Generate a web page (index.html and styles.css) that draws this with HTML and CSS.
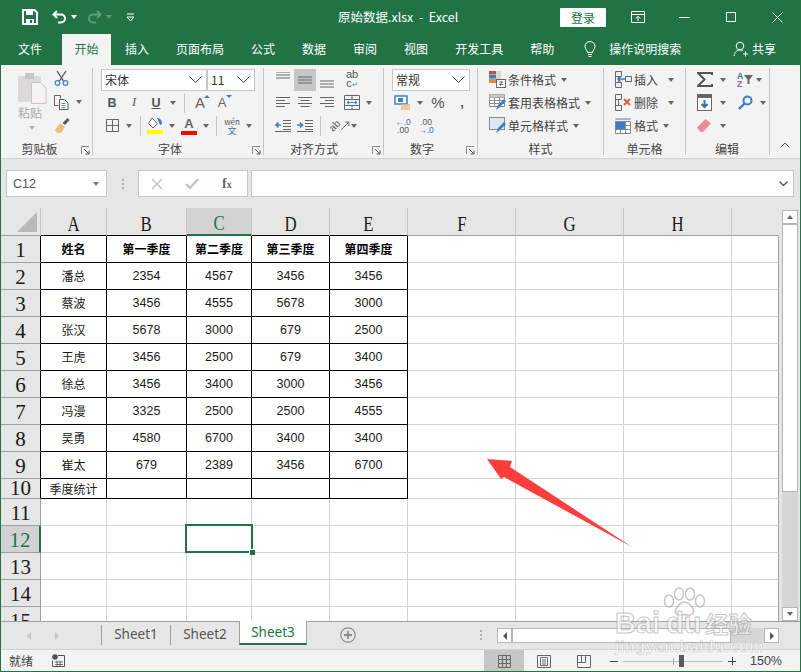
FILE: index.html
```html
<!DOCTYPE html>
<html lang="zh">
<head>
<meta charset="utf-8">
<title>原始数据.xlsx - Excel</title>
<link rel="stylesheet" href="styles.css">
</head>
<body>
<div class="app">
  <header class="titlebar">
    <div class="qat">
      <svg class="q-save" width="16" height="16" viewBox="0 0 16 16"><path d="M1 1h11.500L15 3.500V15H1z" fill="none" stroke="#fff" stroke-width="2"/><rect x="4" y="1" width="7" height="5" fill="#fff"/><rect x="4" y="10" width="8" height="5" fill="#fff"/><rect x="8" y="11" width="2" height="3" fill="#217346"/></svg>
      <svg class="q-undo" width="15" height="14" viewBox="0 0 15 14"><path d="M5 1L1.500 4.500 5 8M2 4.500h7a4 4 0 0 1 0 8H6" fill="none" stroke="#fff" stroke-width="2"/></svg>
      <span class="tri white"></span>
      <svg class="q-redo" width="15" height="14" viewBox="0 0 15 14"><path d="M10 1l3.500 3.500L10 8M13 4.500H6a4 4 0 0 0 0 8h3" fill="none" stroke="#5c9c7c" stroke-width="2"/></svg>
      <span class="tri dim"></span>
      <svg class="q-more" width="9" height="9" viewBox="0 0 9 9"><path d="M1 1h7" stroke="#fff"/><path d="M1 4h7L4.500 8z" fill="none" stroke="#fff"/></svg>
    </div>
    <div class="doc-title">原始数据.xlsx&nbsp; - &nbsp;Excel</div>
    <div class="win">
      <button class="login">登录</button>
      <svg class="w-disp" width="14" height="12" viewBox="0 0 14 12"><path d="M.5.5h13v11H.500zM.5 3.500h13" fill="none" stroke="#fff"/><path d="M7 10V5.500M4.800 7.500L7 5.300l2.200 2.200" fill="none" stroke="#fff"/></svg>
      <svg class="w-min" width="11" height="1" viewBox="0 0 11 1"><rect width="11" height="1" fill="#fff"/></svg>
      <svg class="w-max" width="10" height="10" viewBox="0 0 10 10"><rect x=".5" y=".5" width="9" height="9" fill="none" stroke="#fff"/></svg>
      <svg class="w-close" width="11" height="11" viewBox="0 0 11 11"><path d="M.5.5l10 10M10.500.5l-10 10" stroke="#fff" fill="none"/></svg>
    </div>
  </header>

  <nav class="tabs">
    <span class="tab">文件</span>
    <span class="tab active">开始</span>
    <span class="tab">插入</span>
    <span class="tab">页面布局</span>
    <span class="tab">公式</span>
    <span class="tab">数据</span>
    <span class="tab">审阅</span>
    <span class="tab">视图</span>
    <span class="tab">开发工具</span>
    <span class="tab">帮助</span>
    <svg class="bulb" width="12" height="17" viewBox="0 0 12 17"><path d="M3.500 11.500C3.500 9 1 8.500 1 5.500a5 5 0 0 1 10 0c0 3-2.500 3.500-2.500 6zM4 13.500h4M4.500 15.500h3" fill="none" stroke="#fff"/></svg>
    <span class="search">操作说明搜索</span>
    <span class="share"><svg width="16" height="16" viewBox="0 0 16 16"><circle cx="7" cy="5" r="3.800" fill="none" stroke="#fff"/><path d="M1 15c.5-3.500 2.500-6 6-6 1 0 2 .3 2.800.8M10 13h5M12.500 10.500v5" fill="none" stroke="#fff"/></svg>共享</span>
  </nav>

  <section class="ribbon">
    <div class="group g-clip">
      <div class="body clip-body">
        <div class="paste">
          <svg width="29" height="31" viewBox="0 0 29 31"><rect x="0" y="3" width="23" height="26" fill="#dcd9da"/><rect x="7" y="0" width="9" height="6" fill="#c8c5c6"/><path d="M13.500 9.500h9l5.500 5.500v15.500H13.500z" fill="#f5f3f4" stroke="#c9c6c7"/></svg>
          <span class="paste-label">粘贴</span>
          <span class="tri lt"></span>
        </div>
        <div class="clip-col">
          <svg width="15" height="15" viewBox="0 0 15 15"><path d="M3 0l6.500 10M12 0L5.500 10" stroke="#555" stroke-width="1.300" fill="none"/><circle cx="3.500" cy="12" r="2.300" fill="none" stroke="#4a86c5" stroke-width="1.300"/><circle cx="11.500" cy="12" r="2.300" fill="none" stroke="#4a86c5" stroke-width="1.300"/></svg>
          <div class="rowf"><svg width="15" height="15" viewBox="0 0 15 15"><path d="M.5.500h6v3M.5.500v10h4" fill="none" stroke="#666"/><path d="M5.500 4.500h5l3.500 3.500v6.500H5.500z" fill="#fff" stroke="#555"/><path d="M7.500 8.500h4M7.500 10.500h4M7.500 12.500h4" stroke="#4a86c5"/></svg><span class="tri copy-tri"></span></div>
          <svg width="16" height="15" viewBox="0 0 16 15"><path d="M1 12l5-7 5 4-4 6H3z" fill="#eebc7f"/><path d="M8.500 5l5-5 2 2-4.500 5z" fill="#595959"/></svg>
        </div>
      </div>
      <div class="label l-clip">剪贴板<svg class="launcher" width="9" height="9" viewBox="0 0 9 9"><path d="M.5 8V.5H8" fill="none" stroke="#888"/><path d="M3 3l5 5M8 4.500V8H4.500" fill="none" stroke="#555"/></svg></div>
    </div>

    <div class="group g-font">
      <div class="body">
        <div class="row r1">
          <div class="select font-name"><span>宋体</span><svg class="chev" width="13" height="7" viewBox="0 0 13 7"><path d="M.5.500l6 6 6-6" fill="none" stroke="#444"/></svg></div>
          <div class="select font-size"><span>11</span><svg class="chev" width="13" height="7" viewBox="0 0 13 7"><path d="M.5.500l6 6 6-6" fill="none" stroke="#444"/></svg></div>
        </div>
        <div class="row r2">
          <span class="slot fb">B</span><span class="slot fi">I</span><span class="slot fu">U</span><span class="cslot"><span class="tri"></span></span>
          <span class="sep"></span>
          <span class="slot fa big">A<i class="up"></i></span><span class="slot fa small">A<i class="down"></i></span>
        </div>
        <div class="row r3">
          <span class="slot"><svg width="13" height="13" viewBox="0 0 13 13"><path d="M.5.500h12v12H.500zM6.500.5v12M.5 6.500h12" fill="none" stroke="#666"/></svg></span><span class="cslot"><span class="tri"></span></span>
          <span class="sep s1"></span>
          <span class="slot"><svg width="17" height="17" viewBox="0 0 17 17"><path d="M5 1l5.500 5.500L6 11 1.500 6.500z" fill="#fff" stroke="#666"/><path d="M10 1c3 0 5 2 5 6-1 0-1 1-2 1z" fill="#3b7fc4"/><rect y="13" width="16" height="4" fill="#ff0"/></svg></span><span class="cslot"><span class="tri"></span></span>
          <span class="slot fcol">A</span><span class="cslot"><span class="tri"></span></span>
          <span class="sep s2"></span>
          <span class="slot wen"><b>wén</b><b class="wz">文</b></span><span class="cslot"><span class="tri"></span></span>
        </div>
      </div>
      <div class="label l-font">字体<svg class="launcher" width="9" height="9" viewBox="0 0 9 9"><path d="M.5 8V.5H8" fill="none" stroke="#888"/><path d="M3 3l5 5M8 4.500V8H4.500" fill="none" stroke="#555"/></svg></div>
    </div>

    <div class="group g-align">
      <div class="body">
        <div class="row r1">
          <span class="slot"><svg width="14" height="8" viewBox="0 0 14 8"><path d="M0 .5h14M0 3.500h14M0 6.500h14" stroke="#666" transform="translate(0 -.5)"/></svg><i class="pad-b"></i></span>
          <span class="slot hl"><svg width="14" height="8" viewBox="0 0 14 8"><path d="M0 1h14M0 4h14M0 7h14" stroke="#666"/></svg></span>
          <span class="slot"><i class="pad-t"></i><svg width="14" height="8" viewBox="0 0 14 8"><path d="M0 1h14M0 4h14M0 7h14" stroke="#666"/></svg></span>
          <span class="slot abc"><b>ab</b><b>c<em>↵</em></b></span>
        </div>
        <div class="row r2">
          <span class="slot"><svg width="15" height="11" viewBox="0 0 15 11"><path d="M0 .5h14M0 3.500h9M0 6.500h14M0 9.500h9" stroke="#666"/></svg></span>
          <span class="slot"><svg width="15" height="11" viewBox="0 0 15 11"><path d="M0 .5h14M2.500 3.500h9M0 6.500h14M2.500 9.500h9" stroke="#666"/></svg></span>
          <span class="slot"><svg width="15" height="11" viewBox="0 0 15 11"><path d="M0 .5h14M5 3.500h9M0 6.500h14M5 9.500h9" stroke="#666"/></svg></span>
          <span class="slot wrap"><svg width="16" height="15" viewBox="0 0 16 15"><path d="M.5.500h15v14H.500zM.5 4.500h15M.5 10.500h15M8 .5v4M8 10.500v4" fill="none" stroke="#666"/><path d="M3 7.500h10M5 5.800L3 7.500l2 1.700M11 5.800l2 1.700-2 1.700" fill="none" stroke="#3b7fc4"/></svg></span><span class="cslot"><span class="tri"></span></span>
        </div>
        <div class="row r3">
          <span class="slot"><svg width="16" height="12" viewBox="0 0 16 12"><path d="M8 .5h8M8 3.500h8M8 6.500h8M8 9.500h8M0 11.500h16" stroke="#666"/><path d="M6 5H1M3.500 2.500L1 5l2.500 2.500" fill="none" stroke="#3b7fc4" stroke-width="1.600"/></svg></span>
          <span class="slot"><svg width="16" height="12" viewBox="0 0 16 12"><path d="M8 .5h8M8 3.500h8M8 6.500h8M8 9.500h8M0 11.500h16" stroke="#666"/><path d="M0 5h5M3 2.500L5.500 5 3 7.500" fill="none" stroke="#3b7fc4" stroke-width="1.600"/></svg></span>
          <span class="sep s3"></span>
          <span class="slot orient"><span>ab</span><svg width="11" height="11" viewBox="0 0 11 11"><path d="M1 10L9 2M5 2h4v4" fill="none" stroke="#666"/></svg></span><span class="tri o-tri"></span>
        </div>
      </div>
      <div class="label l-align">对齐方式<svg class="launcher" width="9" height="9" viewBox="0 0 9 9"><path d="M.5 8V.5H8" fill="none" stroke="#888"/><path d="M3 3l5 5M8 4.500V8H4.500" fill="none" stroke="#555"/></svg></div>
    </div>

    <div class="group g-num">
      <div class="body">
        <div class="row r1"><div class="select num-fmt"><span>常规</span><svg class="chev" width="13" height="7" viewBox="0 0 13 7"><path d="M.5.500l6 6 6-6" fill="none" stroke="#444"/></svg></div></div>
        <div class="row r2">
          <span class="slot"><svg width="18" height="15" viewBox="0 0 18 15"><rect x="1" y="1" width="12" height="8" fill="#fff" stroke="#3b7fc4" stroke-width="1.500"/><rect x="4" y="3" width="5" height="4" fill="#3b7fc4"/><path d="M7 10h9M7 12h9M7 14h9" stroke="#eebc7f" stroke-width="1.300"/></svg></span><span class="cslot"><span class="tri"></span></span>
          <span class="pct">%</span><span class="comma">,</span>
        </div>
        <div class="row r3">
          <span class="dec d1"><b class="b1">←.0</b><b>.00</b></span>
          <span class="dec d2"><b>.00</b><b class="b1">→.0</b></span>
        </div>
      </div>
      <div class="label l-num">数字<svg class="launcher" width="9" height="9" viewBox="0 0 9 9"><path d="M.5 8V.5H8" fill="none" stroke="#888"/><path d="M3 3l5 5M8 4.500V8H4.500" fill="none" stroke="#555"/></svg></div>
    </div>

    <div class="group g-style">
      <div class="body">
        <div class="row r1 item"><svg width="17" height="17" viewBox="0 0 17 17"><rect width="12" height="12" fill="#d9d9d9"/><rect width="7" height="3.500" fill="#c0504d"/><rect y="4" width="7" height="3.500" fill="#3b7fc4"/><rect y="8" width="7" height="4" fill="#e08a3c"/><rect x="7.500" y="8.500" width="9" height="8" fill="#fff" stroke="#666"/><path d="M10 11h4M10 13.500h4M13 10l-2 5" stroke="#555" stroke-width=".8"/></svg><span>条件格式</span><span class="tri"></span></div>
        <div class="row r2 item"><svg width="17" height="17" viewBox="0 0 17 17"><path d="M.5.500h15v12H.500zM.5 3.500h15M.5 6.500h15M.5 9.500h15M5.500.5v12M10.500.5v12" fill="#fff" stroke="#888"/><rect x=".5" y=".5" width="15" height="3" fill="#c9c9c9"/><path d="M7 16l2-5 6-6 2 2-6 6z" fill="#3b7fc4"/></svg><span>套用表格格式</span><span class="tri"></span></div>
        <div class="row r3 item"><svg width="17" height="17" viewBox="0 0 17 17"><rect x=".5" y=".5" width="15" height="12" fill="#dfe6ef" stroke="#888"/><path d="M7 16l2-5 6-6 2 2-6 6z" fill="#3b7fc4"/></svg><span>单元格样式</span><span class="tri"></span></div>
      </div>
      <div class="label">样式</div>
    </div>

    <div class="group g-cells">
      <div class="body">
        <div class="row r1 item"><svg width="17" height="17" viewBox="0 0 17 17"><path d="M.5.500h6v5h-6zM.5 11.500h6v5h-6zM.5 5.500h3v6h-3zM10.500 5.500h6v5h-6z" fill="none" stroke="#666"/><path d="M10 8H3M5.500 5.500L3 8l2.500 2.500" fill="none" stroke="#3b7fc4" stroke-width="1.500"/></svg><span>插入</span><span class="tri gap"></span></div>
        <div class="row r2 item"><svg width="17" height="17" viewBox="0 0 17 17"><path d="M.5.500h6v5h-6zM.5 11.500h6v5h-6zM.5 5.500h3v6h-3z" fill="none" stroke="#666"/><path d="M9 5l6 6M15 5l-6 6" stroke="#e2583e" stroke-width="1.800"/></svg><span>删除</span><span class="tri gap"></span></div>
        <div class="row r3 item"><svg width="17" height="17" viewBox="0 0 17 17"><path d="M.5 4.500h15v12H.500zM.5 8.500h15M.5 12.500h15M5.500 4.500v12M10.500 4.500v12" fill="#fff" stroke="#888"/><rect x="1" y="5" width="9" height="7" fill="#3b7fc4"/><path d="M.5 2h15" stroke="#3b7fc4"/></svg><span>格式</span><span class="tri"></span></div>
      </div>
      <div class="label">单元格</div>
    </div>

    <div class="group g-edit">
      <div class="body">
        <div class="row r1">
          <svg class="sigma" width="16" height="15" viewBox="0 0 16 15"><path d="M15 3V1H1l6.500 6.500L1 14h14v-2" fill="none" stroke="#555" stroke-width="2"/></svg><span class="tri t1"></span>
          <span class="az"><b class="az-a">A</b><b class="az-z">Z</b></span><svg width="9" height="9" viewBox="0 0 9 9"><path d="M0 0h9L5.500 4.500V9h-2V4.500z" fill="#666"/></svg><span class="tri t2"></span>
        </div>
        <div class="row r2">
          <svg class="fill-ic" width="15" height="17" viewBox="0 0 15 17"><rect x=".5" y=".5" width="14" height="16" fill="#fff" stroke="#666"/><rect x="1" y="1" width="13" height="3" fill="#666"/><path d="M7.500 6v7M4.500 10l3 3 3-3" fill="none" stroke="#2e6fb5" stroke-width="2"/></svg><span class="tri t1b"></span>
          <svg class="find-ic" width="15" height="15" viewBox="0 0 15 15"><circle cx="9.500" cy="5.500" r="4" fill="none" stroke="#3b7fc4" stroke-width="2"/><path d="M6.500 8.500L1 14" stroke="#3b7fc4" stroke-width="2.400"/></svg><span class="tri t2b"></span>
        </div>
        <div class="row r3">
          <svg class="eraser" width="14" height="13" viewBox="0 0 14 13"><path d="M0 8.500L8.500 0 14 4.500 6 13H3.500z" fill="#ea8a9c"/></svg><span class="tri t3"></span>
        </div>
      </div>
      <div class="label">编辑</div>
    </div>
    <div class="collapse"><svg width="10" height="6" viewBox="0 0 10 6"><path d="M.5 5.500L5 1l4.500 4.500" fill="none" stroke="#555"/></svg></div>
  </section>

  <section class="formula">
    <div class="namebox"><span>C12</span><span class="tri"></span></div>
    <div class="grip"><i></i><i></i><i></i></div>
    <div class="fxbox">
      <svg width="12" height="12" viewBox="0 0 12 12"><path d="M1 1l10 10M11 1L1 11" stroke="#c4c4c4" stroke-width="1.500"/></svg>
      <svg class="chk" width="14" height="12" viewBox="0 0 14 12"><path d="M1 6l4 4 8-9" fill="none" stroke="#c4c4c4" stroke-width="2.400"/></svg>
      <span class="fx"><i>f</i><i class="x">x</i></span>
    </div>
    <div class="finput"><svg width="9" height="5" viewBox="0 0 9 5"><path d="M.5.500l4 4 4-4" fill="none" stroke="#555" stroke-width="1.400"/></svg></div>
  </section>

  <section class="sheet">
    <div class="gridwrap">
      <table class="grid">
        <colgroup><col class="c0"><col class="ca"><col class="cb"><col class="cc"><col class="cd"><col class="ce"><col class="cf"><col class="cf"><col class="cf"><col class="ci"></colgroup>
        <thead>
          <tr class="hrow"><th class="corner"><svg width="20" height="20" viewBox="0 0 20 20"><path d="M20 0v20H0z" fill="#b9b9b9"/></svg></th><th class="dk"><span>A</span></th><th class="dk"><span>B</span></th><th class="dk cur"><span>C</span></th><th class="dk"><span>D</span></th><th class="dk"><span>E</span></th><th><span>F</span></th><th><span>G</span></th><th><span>H</span></th><th></th></tr>
        </thead>
        <tbody>
          <tr><th class="rh bl">1</th><td class="bd hd">姓名</td><td class="bd hd">第一季度</td><td class="bd hd">第二季度</td><td class="bd hd">第三季度</td><td class="bd hd">第四季度</td><td></td><td></td><td></td><td></td></tr>
          <tr><th class="rh bl">2</th><td class="bd nm">潘总</td><td class="bd">2354</td><td class="bd">4567</td><td class="bd">3456</td><td class="bd">3456</td><td></td><td></td><td></td><td></td></tr>
          <tr><th class="rh bl">3</th><td class="bd nm">蔡波</td><td class="bd">3456</td><td class="bd">4555</td><td class="bd">5678</td><td class="bd">3000</td><td></td><td></td><td></td><td></td></tr>
          <tr><th class="rh bl">4</th><td class="bd nm">张汉</td><td class="bd">5678</td><td class="bd">3000</td><td class="bd">679</td><td class="bd">2500</td><td></td><td></td><td></td><td></td></tr>
          <tr><th class="rh bl">5</th><td class="bd nm">王虎</td><td class="bd">3456</td><td class="bd">2500</td><td class="bd">679</td><td class="bd">3400</td><td></td><td></td><td></td><td></td></tr>
          <tr><th class="rh bl">6</th><td class="bd nm">徐总</td><td class="bd">3456</td><td class="bd">3400</td><td class="bd">3000</td><td class="bd">3456</td><td></td><td></td><td></td><td></td></tr>
          <tr><th class="rh bl">7</th><td class="bd nm">冯漫</td><td class="bd">3325</td><td class="bd">2500</td><td class="bd">2500</td><td class="bd">4555</td><td></td><td></td><td></td><td></td></tr>
          <tr><th class="rh bl">8</th><td class="bd nm">吴勇</td><td class="bd">4580</td><td class="bd">6700</td><td class="bd">3400</td><td class="bd">3400</td><td></td><td></td><td></td><td></td></tr>
          <tr><th class="rh bl">9</th><td class="bd nm">崔太</td><td class="bd">679</td><td class="bd">2389</td><td class="bd">3456</td><td class="bd">6700</td><td></td><td></td><td></td><td></td></tr>
          <tr class="short"><th class="rh bl">10</th><td class="bd nm">季度统计</td><td class="bd"></td><td class="bd"></td><td class="bd"></td><td class="bd"></td><td></td><td></td><td></td><td></td></tr>
          <tr><th class="rh">11</th><td></td><td></td><td></td><td></td><td></td><td></td><td></td><td></td><td></td></tr>
          <tr><th class="rh cur-r">12</th><td></td><td></td><td></td><td></td><td></td><td></td><td></td><td></td><td></td></tr>
          <tr><th class="rh">13</th><td></td><td></td><td></td><td></td><td></td><td></td><td></td><td></td><td></td></tr>
          <tr><th class="rh">14</th><td></td><td></td><td></td><td></td><td></td><td></td><td></td><td></td><td></td></tr>
          <tr><th class="rh">15</th><td></td><td></td><td></td><td></td><td></td><td></td><td></td><td></td><td></td></tr>
        </tbody>
      </table>
      <div class="selection"><i class="handle"></i></div>
      <svg class="arrow" width="148" height="90" viewBox="0 0 148 90"><path d="M1 0L26 2 24 8 146 88 18 18 15 20z" fill="#fe3e3c"/></svg>
    </div>
    <div class="vscroll">
      <div class="sbtn top"><span class="tri up-tri"></span></div>
      <div class="vthumb"></div>
      <div class="vtrack"></div>
      <div class="sbtn"><span class="tri"></span></div>
    </div>
  </section>

  <section class="sheetbar">
    <div class="navs"><span class="nav-l"></span><span class="nav-r"></span></div>
    <span class="stab">Sheet1</span>
    <span class="stab">Sheet2</span>
    <span class="stab on">Sheet3</span>
    <svg class="plus" width="16" height="16" viewBox="0 0 16 16"><circle cx="8" cy="8" r="7.200" fill="none" stroke="#8a8a8a" stroke-width="1.200"/><path d="M8 4v8M4 8h8" stroke="#8a8a8a" stroke-width="1.800"/></svg>
    <div class="grip2"><i></i><i></i><i></i></div>
    <div class="hscroll">
      <span class="hbtn"><span class="nav-l dark"></span></span>
      <span class="hthumb"></span>
      <span class="htrack"></span>
      <span class="hbtn"><span class="nav-r dark"></span></span>
    </div>
  </section>

  <footer class="status">
    <span class="ready">就绪</span>
    <svg class="macro" width="13" height="13" viewBox="0 0 13 13"><circle cx="3" cy="3" r="2.800" fill="#555"/><path d="M6 1.500h6.500v11H.5V6.500" fill="none" stroke="#555"/><path d="M3 8h8M3 10.500h8M5 6.500v5.500M8 6.500v5.500" stroke="#555" stroke-width=".8"/></svg>
    <div class="views">
      <span class="view on"><svg width="13" height="13" viewBox="0 0 13 13"><path d="M.5.500h12v12H.500zM4.500.5v12M8.500.5v12M.5 4.500h12M.5 8.500h12" fill="none" stroke="#666"/></svg></span>
      <span class="view"><svg width="14" height="13" viewBox="0 0 14 13"><path d="M.5.500h13v12H.500z" fill="none" stroke="#666"/><path d="M3.500 2.500h7v8h-7zM5 5h4M5 7h4M5 9h4" fill="none" stroke="#666" stroke-width=".9"/></svg></span>
      <span class="view"><svg width="14" height="13" viewBox="0 0 14 13"><path d="M.5.500h13v12H.500zM.5 7.500h8V.5M4.500.5v7" fill="none" stroke="#666"/></svg></span>
    </div>
    <div class="zoom">
      <i class="zm"></i>
      <div class="slider"><i class="tick"></i><i class="knob"></i></div>
      <i class="zp"></i>
    </div>
    <span class="pct-z">150%</span>
  </footer>

  <div class="watermark">
    <svg class="paw" width="43" height="33" viewBox="0 0 43 33"><g fill="rgba(255,255,255,.65)" stroke="rgba(160,160,160,.6)" stroke-width="1.500"><ellipse cx="6" cy="14" rx="4.500" ry="6"/><ellipse cx="16" cy="7" rx="4.500" ry="6"/><ellipse cx="27" cy="7" rx="4.500" ry="6"/><ellipse cx="37" cy="14" rx="4.500" ry="6"/><path d="M21.500 15c4 0 6 3 8 6 3 4 0 8-5 7-2-.5-4-.5-6 0-5 1-8-3-5-7 2-3 4-6 8-6z"/></g></svg>
    <div class="wm1"><span>Bai</span><span class="du">du</span><span class="jy">经验</span></div>
    <div class="wm2">jingyan.baidu.com</div>
  </div>
</div>
</body>
</html>
```
FILE: styles.css
```css
* { box-sizing: border-box; }
html, body { margin: 0; padding: 0; }
body { font-family: "Noto Sans CJK SC", "Liberation Sans", sans-serif; font-size: 12px; color: #444; }
i, em { font-style: normal; }
.app { position: relative; width: 801px; height: 672px; overflow: hidden; display: flex; flex-direction: column; background: #e6e6e6; border: 1px solid #217346; border-width: 0 1px 1px; }

.tri { display: inline-block; width: 0; height: 0; border: 3px solid transparent; border-top: 4px solid #666; border-bottom: 0; }
.tri.white { border-top-color: #fff; }
.tri.dim { border-top-color: #5c9c7c; }
.tri.lt { border-top-color: #b5b5b5; }

.titlebar { height: 34px; flex: none; background: #217346; display: flex; align-items: center; position: relative; color: #fff; }
.qat { display: flex; align-items: center; padding-left: 21px; }
.q-undo { margin-left: 14px; }
.q-undo + .tri { margin-left: 4px; }
.q-redo { margin-left: 10px; }
.q-redo + .tri { margin-left: 4px; }
.q-more { margin-left: 14px; }
.doc-title { position: absolute; left: 337px; top: 7px; line-height: 20px; font-size: 12.500px; white-space: nowrap; }
.win { margin-left: auto; display: flex; align-items: center; }
.login { width: 46px; height: 19px; margin: 0; padding: 0; border: 0; border-radius: 1px; background: #fff; color: #217346; font: 12px/19px "Noto Sans CJK SC", sans-serif; }
.w-disp { margin-left: 25px; }
.w-min { margin-left: 34px; }
.w-max { margin-left: 36px; }
.w-close { margin-left: 36px; margin-right: 17px; }

.tabs { height: 31px; flex: none; background: #217346; color: #fff; display: flex; align-items: stretch; padding-left: 3.500px; position: relative; }
.tab { padding: 0 13.500px; line-height: 30px; }
.tab.active { background: #f3f3f3; color: #217346; padding: 0 12.500px; margin: 0 .5px 0 6.500px; }
.bulb { align-self: center; margin-left: 16.500px; }
.search { margin-left: 13px; line-height: 30px; }
.share { position: absolute; left: 732px; top: 0; line-height: 30px; display: flex; align-items: center; gap: 3px; }

.ribbon { height: 94px; flex: none; background: #f3f3f3; border-bottom: 1px solid #d2d2d2; display: flex; padding-top: 3px; }
.group { display: flex; flex-direction: column; height: 87px; border-right: 1px solid #c6c6c6; position: relative; }
.g-clip { width: 92px; }
.g-font { width: 171px; padding-left: 8px; }
.g-align { width: 120px; padding-left: 8px; }
.g-num { width: 94px; padding-left: 8px; }
.g-style { width: 126px; padding-left: 11px; }
.g-cells { width: 82px; padding-left: 11px; }
.g-edit { width: 84px; padding-left: 10px; }
.body { height: 72px; display: flex; flex-direction: column; flex: none; }
.label { flex: 1; text-align: center; line-height: 17px; color: #444; white-space: nowrap; padding-right: 11px; }
.l-clip { padding-right: 14px; }
.l-font { padding-right: 24px; }
.l-align { padding-right: 27px; }
.l-num { padding-right: 25px; }
.launcher { position: absolute; right: 2px; bottom: 0; }
.collapse { flex: 1; display: flex; justify-content: center; align-items: flex-end; padding: 0 0 7px; height: 87px; }

.row { display: flex; align-items: center; flex: none; }
.r1, .r2, .r3 { height: 23px; }
.slot { width: 22px; height: 22px; display: flex; flex-direction: column; align-items: center; justify-content: center; flex: none; }
.cslot { width: 12px; display: flex; justify-content: center; flex: none; }
.sep { width: 1px; height: 20px; background: #c6c6c6; margin: 0 4.500px; flex: none; }
.s1 { margin: 0 3.500px 0 4.500px; }
.s2 { margin: 0 4px 0 4px; }
.s3 { margin: 0 4px; }

.clip-body { flex-direction: row; }
.paste { width: 30px; margin: 5px 0 0 17px; display: flex; flex-direction: column; align-items: flex-start; }
.paste-label { color: #a8a8a8; line-height: 18px; font-size: 12px; margin-top: 0; }
.paste .tri { margin: 4px 0 0 11px; }
.clip-col { margin-left: 6px; padding-top: 3px; display: flex; flex-direction: column; gap: 8.500px; }
.rowf { display: flex; align-items: center; }
.copy-tri { margin-left: 7px; }

.select { height: 22px; background: #fff; border: 1px solid #c6c6c6; display: flex; align-items: center; justify-content: space-between; padding: 0 4px 0 3px; color: #333; }
.font-name { width: 106px; }
.font-size { width: 48px; }
.num-fmt { width: 78px; }
.num-fmt span, .font-size span { font-size: 12px; }

.fb { font: bold 12.500px "Liberation Sans", sans-serif; color: #555; }
.fi { font: italic 12.500px "Liberation Serif", serif; color: #555; }
.fu { font: bold 12.500px "Liberation Sans", sans-serif; color: #555; text-decoration: underline; }
.fa { position: relative; font-family: "Liberation Sans", sans-serif; color: #666; }
.fa.big { font-size: 15px; }
.fa.small { font-size: 13px; }
.up, .down { position: absolute; right: 1px; top: 3px; width: 0; height: 0; border: 3px solid transparent; }
.up { border-bottom: 3px solid #3b7fc4; border-top: 0; }
.down { border-top: 3px solid #3b7fc4; border-bottom: 0; }
.fcol { font: bold 13px/14px "Liberation Sans", sans-serif; color: #666; }
.fcol::after { content: ""; display: block; width: 16px; height: 4px; background: #f00; }
.wen { line-height: 9px; font-size: 8px; color: #555; }
.wen b { font-weight: 400; }
.wz { color: #2e6fb5; font-size: 9px; }
.hl { background: #c6c6c6; }
.pad-b { height: 8px; }
.pad-t { height: 8px; }
.abc { font: 10px/9px "Liberation Sans", sans-serif; color: #555; margin-left: 3px; }
.abc b { font-weight: 400; font-size: 11px; }
.abc em { color: #3b7fc4; font-size: 7px; }
.wrap { margin-left: 3px; }
.orient { flex-direction: row; width: 22px; margin-left: 4px; font: 10px "Liberation Sans", sans-serif; color: #555; }
.orient span { transform: rotate(-45deg); display: block; }
.o-tri { margin-left: 0; }

.pct { margin-left: 2px; font: 15px "Liberation Sans", sans-serif; color: #555; width: 20px; text-align: center; }
.comma { margin-left: 7px; font: bold 13px "Liberation Sans", sans-serif; color: #555; width: 14px; text-align: center; }
.dec { display: flex; flex-direction: column; font: 8.500px/8px "Liberation Sans", sans-serif; color: #555; width: 20px; text-align: center; }
.dec b { font-weight: 400; }
.dec .b1 { color: #2e6fb5; }
.d1 { margin-left: 1px; }
.d2 { margin-left: 3px; }

.item { gap: 2px; white-space: nowrap; color: #444; font-size: 12px; }
.item .tri { margin-left: 3px; }
.item .gap { margin-left: 8px; }

.sigma { margin-left: 1px; }
.t1 { margin-left: 7px; }
.az { display: flex; flex-direction: column; font: bold 8.500px/8px "Liberation Sans", sans-serif; margin-left: 11px; margin-right: 1px; }
.az-a { color: #2e6fb5; }
.az-z { color: #8e5cb5; }
.t2 { margin-left: 3px; }
.fill-ic { margin-left: 1px; }
.t1b { margin-left: 8px; }
.find-ic { margin-left: 12px; }
.t2b { margin-left: 7px; }
.eraser { margin-left: 1px; }
.t3 { margin-left: 9px; }

.formula { height: 49px; flex: none; background: #e6e6e6; padding: 11px 6px 11px 5px; display: flex; gap: 0; }
.namebox { width: 101px; height: 27px; background: #fff; border: 1px solid #c6c6c6; display: flex; align-items: center; justify-content: space-between; padding: 0 7px 0 6px; font: 12.500px "Liberation Sans", sans-serif; color: #555; }
.namebox .tri { border-top-color: #777; border-width: 4px 3.500px 0; border-bottom: 0; }
.grip { width: 31px; display: flex; flex-direction: column; gap: 2px; align-items: center; justify-content: center; }
.grip i, .grip2 i { width: 2px; height: 2px; background: #b0b0b0; display: block; }
.fxbox { width: 110px; height: 27px; background: #fff; border: 1px solid #c6c6c6; display: flex; align-items: center; padding-left: 12px; }
.chk { margin-left: 22px; }
.fx { margin-left: 23px; font: italic bold 14px "Liberation Serif", serif; color: #666; }
.fx .x { font-size: 10px; }
.finput { margin-left: 3px; flex: 1; height: 27px; background: #fff; border: 1px solid #c6c6c6; display: flex; align-items: center; justify-content: flex-end; padding-right: 5px; }

.sheet { height: 413px; flex: none; display: flex; position: relative; }
.gridwrap { width: 778px; height: 413px; overflow: hidden; position: relative; background: #fff; flex: none; }
.grid { border-collapse: separate; border-spacing: 0; table-layout: fixed; width: 778px; font-family: "Noto Sans CJK SC", sans-serif; }
.c0 { width: 40px; } .ca { width: 66px; } .cb { width: 80px; } .cc { width: 65px; } .cd { width: 78px; } .ce { width: 78px; } .cf { width: 108px; } .ci { width: 47px; }
.grid th, .grid td { padding: 0; overflow: hidden; border-right: 1px solid #d4d4d4; border-bottom: 1px solid #d4d4d4; text-align: center; white-space: nowrap; }
.grid tbody td:last-child { border-right-color: #9f9f9f; }
.grid tr { height: 27px; }
.grid tr.hrow { height: 28px; }
.grid tr.short { height: 20px; }
.grid td { font-size: 12.500px; line-height: 16px; color: #1a1a1a; }
.grid td.bd { border-right-color: #000; border-bottom-color: #000; font-family: "Liberation Sans", "Noto Sans CJK SC", sans-serif; }
.grid td.nm { font-family: "Noto Sans CJK SC", sans-serif; font-size: 12px; }
.grid td.hd { font-weight: 700; font-family: "Noto Sans CJK SC", sans-serif; font-size: 12px; color: #000; }
.grid .hrow th { background: #e6e6e6; font: 400 21px/22px "Liberation Serif", serif; color: #1a1a1a; vertical-align: bottom; border-right-color: #c4c4c4; border-bottom-color: #9f9f9f; }
.grid .hrow th:last-child { border-right-color: #e6e6e6; }
.hrow th span { display: inline-block; transform: scaleX(.8); }
.grid .hrow th.dk { border-bottom-color: #000; }
.grid .hrow th.cur { background: #d2d2d2; color: #217346; border-bottom: 2px solid #217346; }
.corner { position: relative; }
.corner svg { position: absolute; right: 3px; bottom: 3px; }
.grid th.rh { background: #e6e6e6; font: 400 21px/20px "Liberation Serif", serif; color: #1a1a1a; border-bottom-color: #9f9f9f; border-right-color: #9f9f9f; padding-top: 2px; }
.grid tr.short th.rh { line-height: 19px; padding-top: 0; }
.grid th.rh.bl { border-right-color: #000; }
.grid th.cur-r { background: #d2d2d2; color: #217346; border-right: 2px solid #217346; }

.selection { position: absolute; left: 184px; top: 316px; width: 68px; height: 29px; border: 2px solid #217346; }
.handle { position: absolute; right: -4px; bottom: -4px; background: #217346; border: 1px solid #fff; border-width: 1px 0 0 1px; box-sizing: content-box; width: 5px; height: 5px; }
.arrow { position: absolute; left: 485px; top: 251px; }

.vscroll { flex: 1; display: flex; flex-direction: column; padding: 2px 2px 0 3px; background: #e6e6e6; }
.sbtn { height: 14px; background: #fff; border: 1px solid #b5b5b5; display: flex; align-items: center; justify-content: center; flex: none; }
.up-tri { transform: rotate(180deg); }
.vthumb { height: 268px; flex: none; background: #fff; border: 1px solid #b5b5b5; }
.vtrack { flex: 1; background: #d6d6d6; }

.sheetbar { height: 28px; flex: none; background: #e6e6e6; border-top: 1px solid #9f9f9f; display: flex; align-items: stretch; position: relative; }
.navs { width: 100px; display: flex; align-items: center; gap: 24px; padding-left: 26px; }
.nav-l, .nav-r { display: block; width: 0; height: 0; border: 4px solid transparent; }
.nav-l { border-right: 4px solid #c4c4c4; border-left: 0; }
.nav-r { border-left: 4px solid #c4c4c4; border-right: 0; }
.nav-l.dark { border-right-color: #555; }
.nav-r.dark { border-left-color: #555; }
.stab { width: 69px; margin-top: 3px; height: 20px; border-left: 1px solid #9f9f9f; color: #555; font: 13.500px/18px "Noto Sans", "Liberation Sans", sans-serif; text-align: center; }
.stab.on { width: 68px; margin-top: -1px; height: 24px; background: #fff; color: #217346; border-left: 1px solid #9f9f9f; border-right: 1px solid #9f9f9f; border-bottom: 2px solid #217346; line-height: 22px; }
.plus { margin: 5px 0 0 33px; }
.grip2 { display: flex; flex-direction: column; gap: 2px; justify-content: center; margin-left: 124px; width: 2px; height: 100%; padding-bottom: 2px; }
.hscroll { position: absolute; left: 496px; top: 6px; width: 282px; height: 15px; display: flex; background: #d6d6d6; }
.hbtn { width: 15px; background: #fff; border: 1px solid #b5b5b5; display: flex; align-items: center; justify-content: center; flex: none; }
.hthumb { width: 219px; background: #fff; border: 1px solid #b5b5b5; }
.htrack { flex: 1; }

.status { flex: 1; background: #f3f3f3; border-top: 1px solid #d2d2d2; display: flex; align-items: center; position: relative; }
.ready { margin-left: 8px; color: #444; }
.macro { margin-left: 19px; }
.views { position: absolute; left: 483px; top: 0; height: 22px; display: flex; }
.view { width: 40px; display: flex; align-items: center; justify-content: center; }
.view.on { background: #c6c6c6; }
.zoom { position: absolute; left: 609px; top: 0; height: 22px; width: 128px; display: flex; align-items: center; }
.zm { width: 8px; height: 1px; background: #444; flex: none; }
.slider { width: 100px; height: 1px; background: #bdbdbd; margin: 0 5px; position: relative; flex: none; }
.tick { position: absolute; left: 50px; top: -3px; width: 1px; height: 7px; background: #aaa; }
.knob { position: absolute; left: 56px; top: -6px; width: 5px; height: 12px; background: #5a5a5a; }
.zp { width: 8px; height: 8px; flex: none; background: linear-gradient(#444,#444) center/8px 1px no-repeat, linear-gradient(#444,#444) center/1px 8px no-repeat; }
.pct-z { position: absolute; left: 749px; top: 2px; font: 12.500px/18px "Liberation Sans", sans-serif; color: #444; }

.watermark { position: absolute; left: 614px; top: 586px; width: 150px; height: 76px; color: rgba(255,255,255,.6); }
.paw { position: absolute; left: 48px; top: 1px; }
.wm1 { position: absolute; left: 0; top: 19px; font: bold 29px/36px "Liberation Sans", sans-serif; -webkit-text-stroke: 1px rgba(160,160,160,.6); white-space: nowrap; }
.wm1 .du { margin-left: 6px; }
.wm1 .jy { margin-left: 4px; font: 700 23px/36px "Noto Sans CJK SC", sans-serif; }
.wm2 { position: absolute; left: 0; top: 51px; font: bold 16px/20px "Liberation Sans", sans-serif; letter-spacing: .5px; -webkit-text-stroke: .6px rgba(160,160,160,.5); white-space: nowrap; }
```
